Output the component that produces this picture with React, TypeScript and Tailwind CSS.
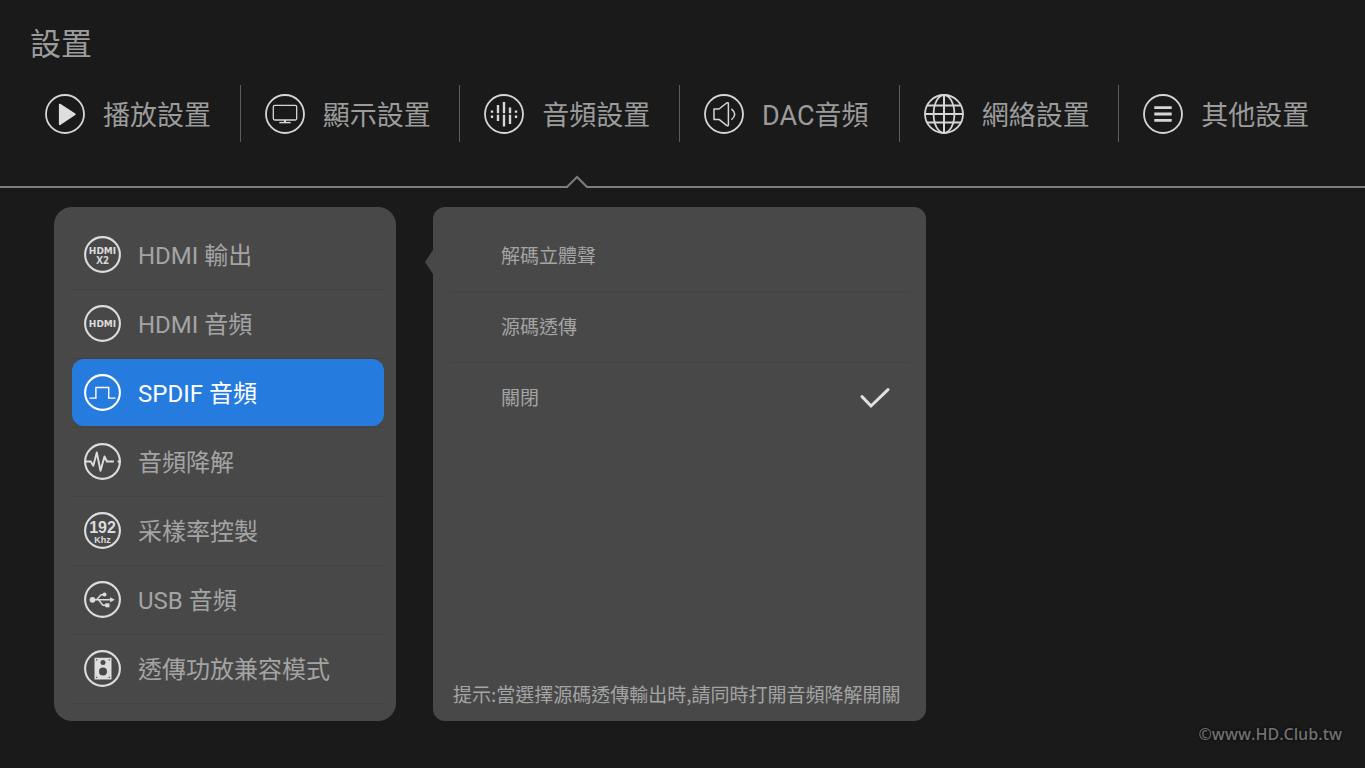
import { useState } from 'react';
import type { ReactNode } from 'react';
import clsx from 'clsx';

const FONT = 'font-[Roboto,"Noto_Sans_CJK_TC",sans-serif]';

// Round outline shared by the icons of the top bar, centred on 0,0
function TabIcon({ children }: { children: ReactNode }) {
    return (
        <svg
            viewBox="-20 -20 40 40"
            className="h-10 w-10 shrink-0"
            fill="none"
            stroke="#d6d6d6"
            strokeWidth="1.8"
            aria-hidden="true"
        >
            <circle r="19" />
            {children}
        </svg>
    );
}

// Same thing, a bit smaller and heavier, for the side menu
function MenuIcon({ children }: { children?: ReactNode }) {
    return (
        <svg
            viewBox="-18.5 -18.5 37 37"
            className="h-[37px] w-[37px] shrink-0"
            fill="none"
            stroke="currentColor"
            strokeWidth="2.1"
            aria-hidden="true"
        >
            <circle r="17.4" />
            {children}
        </svg>
    );
}

const tabs = [
    {
        id: 'play',
        label: '播放設置',
        icon: (
            <TabIcon>
                <path
                    d="M-5.2 -9.4 L9.8 0.2 L-5.2 10.2 Z"
                    fill="#dedede"
                    stroke="#dedede"
                    strokeLinejoin="round"
                />
            </TabIcon>
        ),
    },
    {
        id: 'display',
        label: '顯示設置',
        icon: (
            <TabIcon>
                <rect x="-11.7" y="-8.6" width="23.4" height="14.6" rx="1.5" strokeWidth="1.3" />
                <path d="M0 6 V8.5" strokeWidth="2" />
                <path d="M-5.7 8.6 H5.7" strokeWidth="1.4" />
            </TabIcon>
        ),
    },
    {
        id: 'audio',
        label: '音頻設置',
        icon: (
            <TabIcon>
                <path
                    d="M0 -12 V-0.8 M0 0.8 V12.6 M-6 -9 V-0.8 M-6 0.8 V7 M6 -6.6 V-0.8 M6 0.8 V10 M-12 -3.6 V-1.2 M-12 1.4 V4 M12 -3.6 V-1.2 M12 1.4 V4"
                    strokeWidth="2.4"
                />
            </TabIcon>
        ),
    },
    {
        id: 'dac',
        label: 'DAC音頻',
        icon: (
            <TabIcon>
                <path
                    d="M-10 -5 H-5 L2.6 -11 Q4.4 -12 4.4 -10 V10.6 Q4.4 12.6 2.6 11.4 L-5 5.4 H-10 Z"
                    strokeWidth="1.5"
                    strokeLinejoin="round"
                />
                <path d="M7.4 -5.2 Q14 0.2 7.4 5.8" strokeWidth="1.5" />
            </TabIcon>
        ),
    },
    {
        id: 'network',
        label: '網絡設置',
        icon: (
            <TabIcon>
                <ellipse rx="10.4" ry="19" />
                <path d="M0 -19 V19 M-19 0 H19 M-17 -8.4 H17 M-17 8.4 H17" strokeWidth="2" />
            </TabIcon>
        ),
    },
    {
        id: 'other',
        label: '其他設置',
        icon: (
            <TabIcon>
                <path d="M-8.7 -6.4 H8.7 M-8.7 0 H8.7 M-8.7 6.4 H8.7" strokeWidth="2.8" />
            </TabIcon>
        ),
    },
];

const logoText = {
    textAnchor: 'middle' as const,
    fill: 'currentColor',
    stroke: 'none',
    fontWeight: 700,
};

const menu = [
    {
        id: 'hdmi-out',
        label: 'HDMI 輸出',
        icon: (
            <MenuIcon>
                <text {...logoText} y="-1" fontSize="9" fontFamily="DejaVu Sans">
                    HDMI
                </text>
                <text {...logoText} y="9.6" fontSize="10" fontFamily="Open Sans">
                    X2
                </text>
            </MenuIcon>
        ),
    },
    {
        id: 'hdmi-audio',
        label: 'HDMI 音頻',
        icon: (
            <MenuIcon>
                <text {...logoText} y="3" fontSize="9" fontFamily="DejaVu Sans">
                    HDMI
                </text>
            </MenuIcon>
        ),
    },
    {
        id: 'spdif',
        label: 'SPDIF 音頻',
        icon: (
            <MenuIcon>
                <path d="M-13 5.6 H-6.6 V-5 H6.2 V5.6 H13" strokeWidth="1.4" />
            </MenuIcon>
        ),
    },
    {
        id: 'downmix',
        label: '音頻降解',
        icon: (
            <MenuIcon>
                <path
                    d="M-18 0 H-11.7 L-9.2 4.3 L-5.7 -9 L-2 9.3 L2 -5 L4.4 0 H11.4 M15 0 H18"
                    strokeWidth="1.9"
                    strokeLinejoin="round"
                />
            </MenuIcon>
        ),
    },
    {
        id: 'sample-rate',
        label: '采樣率控製',
        icon: (
            <MenuIcon>
                <text {...logoText} y="2" fontSize="16" fontFamily="Liberation Sans">
                    192
                </text>
                <text {...logoText} y="12" fontSize="9" fontFamily="Liberation Sans">
                    Khz
                </text>
            </MenuIcon>
        ),
    },
    {
        id: 'usb',
        label: 'USB 音頻',
        icon: (
            <MenuIcon>
                <path
                    d="M-10 0.3 H8 M-6 0.3 L-1.4 -4.8 H2 M-4 0.3 L0.4 5.8 H4"
                    strokeWidth="1.4"
                />
                <g fill="currentColor" stroke="none">
                    <circle cx="-10" cy="0.3" r="2.9" />
                    <circle cx="2" cy="-5" r="2" />
                    <rect x="2.8" y="3.8" width="4.2" height="4" />
                    <path d="M7.6 -2.2 L12.4 0.3 L7.6 2.8 Z" />
                </g>
            </MenuIcon>
        ),
    },
    {
        id: 'passthrough',
        label: '透傳功放兼容模式',
        icon: (
            <MenuIcon>
                <path
                    d="M-8 -10.8 H9 V11 H-8 Z M-2 -6 a2.5 2.5 0 1 0 5 0 a2.5 2.5 0 1 0 -5 0 Z M-3.5 3 a4 4 0 1 0 8 0 a4 4 0 1 0 -8 0 Z M-6.4 -9.2 v1.2 h1.2 v-1.2 Z M6.2 -9.2 v1.2 h1.2 v-1.2 Z M-6.4 8.2 v1.2 h1.2 v-1.2 Z M6.2 8.2 v1.2 h1.2 v-1.2 Z"
                    fill="currentColor"
                    fillRule="evenodd"
                    stroke="none"
                />
            </MenuIcon>
        ),
    },
];

const options = ['解碼立體聲', '源碼透傳', '關閉'];

export default function App() {
    const [tab, setTab] = useState('audio');
    const [item, setItem] = useState('spdif');
    const [option, setOption] = useState('關閉');

    return (
        <div className={clsx('flex min-h-screen flex-col bg-[#1a1a1a] text-[#9c9c9c]', FONT)}>
            <header className="border-b-2 border-[#7d7d7d] pt-[22px]">
                <h1 className="px-[30px] text-[31px] leading-[46px]">設置</h1>

                {/* Pestañas principales */}
                <nav className="grid grid-cols-6 pt-[17px] pr-[26px] pl-[21px]">
                    {tabs.map(({ id, label, icon }) => (
                        <div key={id} className="group relative pb-11">
                            <button
                                type="button"
                                onClick={() => setTab(id)}
                                className="flex h-[57px] w-full items-center gap-[18px] border-r border-[#5c5c5c] pl-6 text-[27px] whitespace-nowrap group-last:border-transparent"
                            >
                                {icon}
                                <span className="pt-1.5">{label}</span>
                            </button>
                            {tab === id && (
                                <svg
                                    viewBox="0 0 24 14"
                                    className="absolute -bottom-0.5 left-[105px] h-[14px] w-6"
                                    aria-hidden="true"
                                >
                                    <path d="M2 14 L12 3 L22 14 Z" fill="#1a1a1a" />
                                    <path
                                        d="M0 13 H2 L12 3 L22 13 H24"
                                        fill="none"
                                        stroke="#7d7d7d"
                                        strokeWidth="2"
                                    />
                                </svg>
                            )}
                        </div>
                    ))}
                </nav>
            </header>

            <main className="grid grid-cols-[342fr_493fr_402fr] gap-[37px] pt-[19px] pl-[54px]">
                {/* Menú lateral */}
                <ul className="rounded-[18px] bg-[#484848] pt-[14px] pr-3 pb-[17px] pl-[18px]">
                    {menu.map(({ id, label, icon }) => (
                        <li key={id} className="border-b border-[#424242] pb-px">
                            <button
                                type="button"
                                onClick={() => setItem(id)}
                                className={clsx(
                                    'flex h-[67px] w-full items-center gap-[17px] rounded-xl pl-3 text-2xl whitespace-nowrap',
                                    item === id ? 'bg-[#267bde] text-white' : 'text-[#a4a4a4]'
                                )}
                            >
                                <span className={item === id ? 'text-white' : 'text-[#dcdcdc]'}>
                                    {icon}
                                </span>
                                <span className="pt-0.5">{label}</span>
                            </button>
                        </li>
                    ))}
                </ul>

                {/* Opciones del elemento elegido */}
                <section className="relative flex flex-col rounded-xl bg-[#484848] px-4 pt-[14px] pb-3 text-[#a4a4a4]">
                    <svg
                        viewBox="0 0 9 24"
                        className="absolute top-[43px] -left-2 h-6 w-[9px]"
                        aria-hidden="true"
                    >
                        <path d="M9 0 H8 L0 12 L8 24 H9 Z" fill="#484848" />
                    </svg>
                    {options.map((name) => (
                        <label
                            key={name}
                            className="flex h-[71px] cursor-pointer items-center justify-between border-b border-[#434343] pr-5 pl-[52px] text-[19px] last-of-type:border-transparent"
                        >
                            <input
                                type="radio"
                                name="spdif"
                                checked={option === name}
                                onChange={() => setOption(name)}
                                className="sr-only"
                            />
                            <span className="pt-0.5">{name}</span>
                            {option === name && (
                                <svg
                                    viewBox="0 0 30 22"
                                    className="h-[22px] w-[30px]"
                                    fill="none"
                                    stroke="#e0e0e0"
                                    strokeWidth="3"
                                    strokeLinecap="round"
                                    aria-hidden="true"
                                >
                                    <path d="M2 9.6 L11 19 L28 2.6" />
                                </svg>
                            )}
                        </label>
                    ))}
                    <p className="mt-auto pl-1 font-['Noto_Sans_CJK_TC',sans-serif] text-[19px] leading-[30px] whitespace-nowrap">
                        提示:當選擇源碼透傳輸出時,請同時打開音頻降解開關
                    </p>
                </section>
            </main>

            <footer className="pt-px pr-[23px] text-right font-['Open_Sans',sans-serif] text-base leading-6 font-semibold text-[#707070] text-shadow-[0_0_3px_#000]">
                ©www.HD.Club.tw
            </footer>
        </div>
    );
}
